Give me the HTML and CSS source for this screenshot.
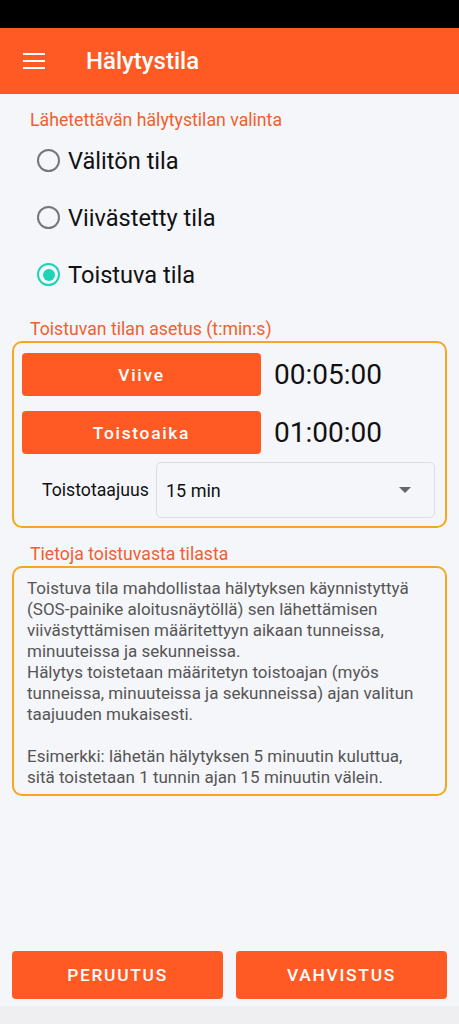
FILE: index.html
```html
<!DOCTYPE html>
<html lang="fi">
<head>
    <meta charset="UTF-8">
    <meta name="viewport" content="width=device-width, initial-scale=1.0">
    <title>Hälytystila</title>
    <link rel="stylesheet" href="styles.css">
</head>
<body>
    <div class="screen">
        <div class="status-bar"></div>

        <div class="app-bar">
            <svg class="menu-icon" width="24" height="24" viewBox="0 0 24 24">
                <path d="M1 5h22M1 12h22M1 19h22" stroke="#fff" stroke-width="2.2" fill="none"/>
            </svg>
            <span class="app-title">Hälytystila</span>
        </div>

        <div class="content">
            <div class="section-label first">Lähetettävän hälytystilan valinta</div>
            <div class="radio-list">
                <div class="radio-row">
                    <span class="radio"></span>
                    <span class="radio-text">Välitön tila</span>
                </div>
                <div class="radio-row">
                    <span class="radio"></span>
                    <span class="radio-text">Viivästetty tila</span>
                </div>
                <div class="radio-row">
                    <span class="radio checked"></span>
                    <span class="radio-text">Toistuva tila</span>
                </div>
            </div>

            <div class="section-label">Toistuvan tilan asetus (t:min:s)</div>
            <div class="box settings">
                <div class="time-row">
                    <button class="time-btn">Viive</button>
                    <span class="time-value">00:05:00</span>
                </div>
                <div class="time-row">
                    <button class="time-btn">Toistoaika</button>
                    <span class="time-value">01:00:00</span>
                </div>
                <div class="freq-row">
                    <span class="freq-label">Toistotaajuus</span>
                    <div class="select">
                        <span>15 min</span>
                        <svg width="14" height="8" viewBox="0 0 14 8">
                            <path d="M1 1h12L7 7z" fill="#666"/>
                        </svg>
                    </div>
                </div>
            </div>

            <div class="section-label">Tietoja toistuvasta tilasta</div>
            <div class="box info">
                Toistuva tila mahdollistaa hälytyksen käynnistyttyä (SOS-painike aloitusnäytöllä) sen lähettämisen viivästyttämisen määritettyyn aikaan tunneissa, minuuteissa ja sekunneissa.<br>
                Hälytys toistetaan määritetyn toistoajan (myös tunneissa, minuuteissa ja sekunneissa) ajan valitun taajuuden mukaisesti.<br>
                <br>
                Esimerkki: lähetän hälytyksen 5 minuutin kuluttua, sitä toistetaan 1 tunnin ajan 15 minuutin välein.
            </div>
        </div>

        <div class="footer">
            <button class="footer-btn">PERUUTUS</button>
            <button class="footer-btn">VAHVISTUS</button>
        </div>
        <div class="nav-bar"></div>
    </div>
</body>
</html>
```

FILE: styles.css
```css
body {
    margin: 0;
    font-family: Roboto, "Noto Sans", sans-serif;
    background-color: #f5f6fa;
    color: #111;
}
.screen {
    width: 459px;
    height: 1024px;
    display: flex;
    flex-direction: column;
    background-color: #f5f6fa;
}
.status-bar {
    height: 28px;
    background-color: #000;
}
.app-bar {
    height: 66px;
    background-color: #ff5a24;
    display: flex;
    align-items: center;
    padding-left: 22px;
}
.app-title {
    color: #fff;
    font-size: 24px;
    font-weight: 500;
    margin-left: 40px;
}
.content {
    flex: 1;
    padding: 0 12px;
}
.section-label {
    color: #f0602e;
    font-size: 17.7px;
    line-height: 24px;
    margin: 14px 0 0 18px;
}
.radio-list {
    padding-left: 25px;
}
.radio-row {
    height: 57px;
    display: flex;
    align-items: center;
}
.radio {
    width: 19px;
    height: 19px;
    border: 2.4px solid #777;
    border-radius: 50%;
    box-sizing: content-box;
    display: flex;
    align-items: center;
    justify-content: center;
}
.radio.checked {
    border-color: #1fd3b8;
}
.radio.checked::after {
    content: "";
    width: 12px;
    height: 12px;
    border-radius: 50%;
    background-color: #1fd3b8;
}
.radio-text {
    font-size: 23.6px;
    margin-left: 8px;
    color: #111;
}
.box {
    border: 2px solid #f5a623;
    border-radius: 10px;
}
.settings {
    margin-top: 0;
    padding: 10px 10px 8px 8px;
}
.time-row {
    display: flex;
    align-items: center;
    margin-bottom: 15px;
}
.time-row + .time-row {
    margin-bottom: 8px;
}
.time-btn {
    width: 239px;
    height: 43px;
    border: none;
    border-radius: 4px;
    background-color: #ff5a24;
    color: #fff;
    font-family: Roboto, sans-serif;
    font-size: 17.4px;
    font-weight: 500;
    letter-spacing: 1.7px;
}
.time-value {
    font-size: 28px;
    margin-left: 13px;
    color: #111;
}
.freq-row {
    display: flex;
    align-items: center;
}
.freq-label {
    font-size: 17.7px;
    padding-left: 20px;
}
.select {
    height: 54px;
    margin-left: auto;
    border: 1px solid #dcdde2;
    border-radius: 5px;
    display: flex;
    align-items: center;
    justify-content: space-between;
    padding: 0 22px 0 9px;
    box-sizing: content-box;
    width: 246px;
    font-size: 18px;
}
.info {
    padding: 10px 13px 6px 13px;
    font-size: 17px;
    line-height: 21px;
    color: #555;
}
.footer {
    display: flex;
    gap: 13px;
    padding: 0 12px;
    margin-bottom: 7px;
}
.footer-btn {
    flex: 1;
    height: 48px;
    border: none;
    border-radius: 4px;
    background-color: #ff5a24;
    color: #fff;
    font-family: Roboto, sans-serif;
    font-size: 17.4px;
    font-weight: 500;
    letter-spacing: 1.7px;
}
.nav-bar {
    height: 18px;
    background-color: #efeff1;
}
```
